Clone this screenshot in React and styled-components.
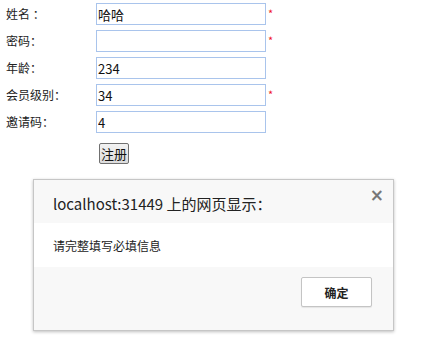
import React from 'react';
import styled, { createGlobalStyle } from 'styled-components';

const Global = createGlobalStyle`
body {
    margin: 0;
    background: #fff;
    font-family: "Noto Sans CJK SC", "Noto Sans", sans-serif;
    font-size: 12px;
    color: #222;
}
`;

const fields = [
    { label: '姓名 ：', value: '哈哈', required: true },
    { label: '密码：', value: '', required: true },
    { label: '年龄：', value: '234', required: false },
    { label: '会员级别：', value: '34', required: true },
    { label: '邀请码：', value: '4', required: false },
];

const App = () => {
    return (
        <Page>
            <Global />
            <Form>
                {fields.map((f) => (
                    <Row key={f.label}>
                        <Label>{f.label}</Label>
                        <Input defaultValue={f.value} />
                        {f.required && <Star>*</Star>}
                    </Row>
                ))}
                <Submit>注册</Submit>
            </Form>

            <Dialog>
                <Header>
                    <Title>localhost:31449 上的网页显示：</Title>
                    <Close>×</Close>
                </Header>
                <Body>请完整填写必填信息</Body>
                <Footer>
                    <OkButton>确定</OkButton>
                </Footer>
            </Dialog>
        </Page>
    );
};

export default App;

const Page = styled.div`
position: relative;
width: 446px;
height: 362px;
`;

const Form = styled.div`
display: flex;
flex-direction: column;
gap: 5px;
padding: 3px 0 0 6px;
`;

const Row = styled.div`
display: flex;
align-items: center;
height: 22px;
`;

const Label = styled.div`
width: 90px;
font-size: 12px;
line-height: 22px;
white-space: pre;
`;

const Input = styled.input`
box-sizing: border-box;
width: 170px;
height: 22px;
border: 1px solid #a9c4ec;
padding: 0 1px;
margin: 0;
font-family: "Noto Sans CJK SC", "Noto Sans", sans-serif;
font-size: 13px;
color: #111;
outline: none;
`;

const Star = styled.span`
color: #f0142a;
font-size: 11px;
margin-left: 2px;
align-self: flex-start;
line-height: 16px;
margin-top: 2px;
`;

const Submit = styled.button`
align-self: flex-start;
margin: 5px 0 0 93px;
height: 21px;
padding: 0 1px;
font-family: "Noto Sans CJK SC", sans-serif;
font-size: 13px;
color: #111;
background: linear-gradient(#f2f2f2, #dcdcdc);
border: 1px solid #707070;
border-radius: 2px;
line-height: 17px;
`;

const Dialog = styled.div`
position: absolute;
left: 33px;
top: 179px;
box-sizing: border-box;
width: 361px;
height: 152px;
border: 1px solid #c6c6c6;
box-shadow: 0 1px 3px rgba(0, 0, 0, 0.25);
background: #f8f8f8;
display: flex;
flex-direction: column;
`;

const Header = styled.div`
position: relative;
height: 43px;
display: flex;
align-items: center;
padding: 0 0 0 19px;
`;

const Title = styled.div`
font-family: "Noto Sans CJK SC", "Noto Sans", sans-serif;
font-size: 15px;
color: #222;
margin-top: 4px;
`;

const Close = styled.div`
position: absolute;
right: 9px;
top: 5px;
font-family: "DejaVu Sans", sans-serif;
font-size: 17px;
font-weight: bold;
color: #777;
`;

const Body = styled.div`
background: #fff;
height: 44px;
display: flex;
align-items: center;
padding-left: 19px;
font-size: 12px;
color: #222;
`;

const Footer = styled.div`
flex: 1;
display: flex;
justify-content: flex-end;
align-items: flex-start;
padding: 10px 21px 0 0;
`;

const OkButton = styled.button`
width: 71px;
height: 30px;
background: #fff;
border: 1px solid #c4c4c4;
border-radius: 2px;
box-shadow: 0 1px 1px rgba(0, 0, 0, 0.08);
font-family: "Noto Sans CJK SC", sans-serif;
font-size: 12px;
font-weight: bold;
color: #222;
`;
